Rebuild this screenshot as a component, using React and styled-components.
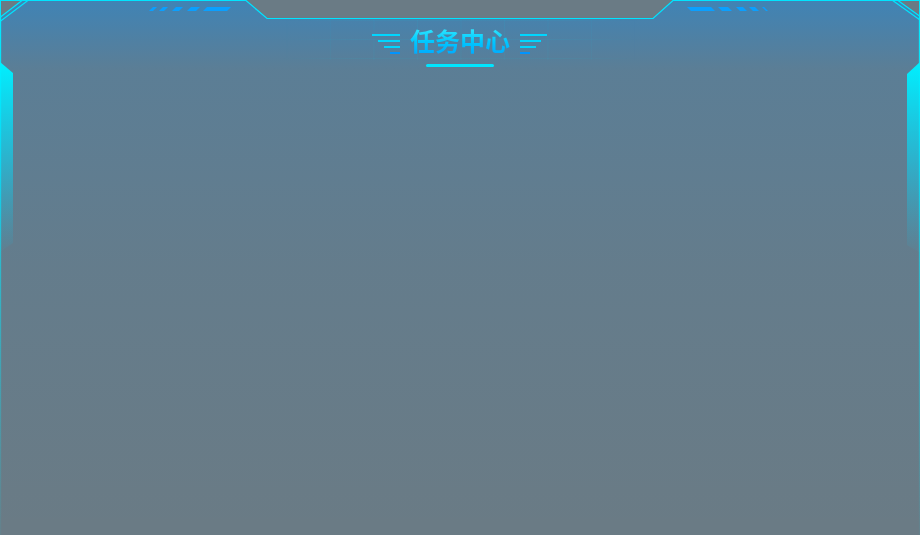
import React from "react";
import styled, { createGlobalStyle } from "styled-components";

const GlobalStyle = createGlobalStyle`
  html, body {
    margin: 0;
    padding: 0;
    background: #6a7b85;
    font-family: "Noto Sans CJK SC", "Noto Sans", sans-serif;
  }
`;

const Panel = styled.section`
  position: relative;
  width: 920px;
  height: 535px;
  overflow: hidden;
`;

const Frame = styled.svg`
  position: absolute;
  inset: 0;
  z-index: 0;
  pointer-events: none;
`;

const Header = styled.header`
  position: relative;
  z-index: 1;
  display: flex;
  flex-direction: column;
  align-items: center;
  padding-top: 20px;
`;

const TitleBand = styled.div`
  width: 360px;
  height: 40px;
  display: flex;
  align-items: center;
  justify-content: center;
  gap: 10px;
  background-image:
    linear-gradient(rgba(0, 229, 255, 0.06) 1px, transparent 1px),
    linear-gradient(90deg, rgba(0, 229, 255, 0.06) 1px, transparent 1px);
  background-size: 43.5px 19px;
  background-position: 6.5px 0;
  -webkit-mask-image: linear-gradient(90deg, transparent, #000 22%, #000 78%, transparent);
  mask-image: linear-gradient(90deg, transparent, #000 22%, #000 78%, transparent);
`;

const Wing = styled.div`
  width: 28px;
  margin-top: 8px;
  display: flex;
  flex-direction: column;
  gap: 4px;
  align-items: ${(p) => (p.$side === "left" ? "flex-end" : "flex-start")};
`;

const WingBar = styled.span`
  display: block;
  height: 2px;
  width: ${(p) => p.$w}px;
  background: ${(p) => (p.$last ? "#0094ff" : "#00d6ff")};
`;

const Title = styled.h1`
  margin: 0;
  font-size: 25px;
  line-height: 28px;
  font-weight: 700;
  letter-spacing: 0;
  background: linear-gradient(180deg, #36ecff 0%, #00c8ff 55%, #00acff 100%);
  -webkit-background-clip: text;
  background-clip: text;
  color: transparent;
`;

const Underline = styled.div`
  width: 68px;
  height: 3px;
  margin-top: 4px;
  border-radius: 2px;
  background: #00e5ff;
`;

const leftDashes = [
  [149, 157],
  [159, 168],
  [172, 183],
  [187, 200],
  [203, 231],
];
const rightDashes = [
  [687, 715],
  [718, 732],
  [736, 747],
  [749, 759],
  [762, 768],
];

function FrameArt() {
  return (
    <Frame width="920" height="535" viewBox="0 0 920 535">
      <defs>
        <linearGradient id="panelFill" x1="0" y1="0" x2="0" y2="535" gradientUnits="userSpaceOnUse">
          <stop offset="0" stopColor="#148ce6" stopOpacity="0.5" />
          <stop offset="0.13" stopColor="#148ce6" stopOpacity="0.17" />
          <stop offset="0.5" stopColor="#148ce6" stopOpacity="0.07" />
          <stop offset="1" stopColor="#148ce6" stopOpacity="0" />
        </linearGradient>
        <linearGradient id="edgeLine" x1="0" y1="17" x2="0" y2="535" gradientUnits="userSpaceOnUse">
          <stop offset="0" stopColor="#00eaff" stopOpacity="1" />
          <stop offset="1" stopColor="#00eaff" stopOpacity="0.05" />
        </linearGradient>
        <linearGradient id="sideBar" x1="0" y1="62" x2="0" y2="252" gradientUnits="userSpaceOnUse">
          <stop offset="0" stopColor="#00f0ff" stopOpacity="1" />
          <stop offset="0.5" stopColor="#00e0ff" stopOpacity="0.55" />
          <stop offset="1" stopColor="#00d0ff" stopOpacity="0.03" />
        </linearGradient>
      </defs>

      <path
        d="M0 17 L22 0 L246 0 L267 18 L653 18 L673 0 L898 0 L920 16 L920 535 L0 535 Z"
        fill="url(#panelFill)"
      />

      <path
        d="M0.5 17 L22 0.5 L246 0.5 L267 18.5 L653 18.5 L673 0.5 L898 0.5 L919.5 16"
        fill="none"
        stroke="#00e5ff"
        strokeWidth="1.2"
      />
      <path d="M0 0.5 L22 0.5 M0.5 0 L0.5 17" stroke="#00e5ff" strokeWidth="1" fill="none" />
      <path d="M898 0.5 L920 0.5 M919.5 0 L919.5 16" stroke="#00e5ff" strokeWidth="1" fill="none" />
      <path d="M0 21.5 L28.5 0" stroke="#00e5ff" strokeWidth="1.2" fill="none" />
      <path d="M892 0 L920 20" stroke="#00e5ff" strokeWidth="1.2" fill="none" />

      <path d="M0.5 17 L0.5 535" stroke="url(#edgeLine)" strokeWidth="1.3" fill="none" />
      <path d="M919.5 16 L919.5 535" stroke="url(#edgeLine)" strokeWidth="1.3" fill="none" />

      <polygon points="0,62 13,73 13,243 0,252" fill="url(#sideBar)" />
      <polygon points="920,62 907,74 907,245 920,253" fill="url(#sideBar)" />

      {leftDashes.map(([a, b]) => (
        <polygon key={a} points={`${a + 4},7 ${b},7 ${b - 4},11 ${a},11`} fill="#0aa0ff" />
      ))}
      {rightDashes.map(([a, b]) => (
        <polygon key={a} points={`${a},7 ${b - 4},7 ${b},11 ${a + 4},11`} fill="#0aa0ff" />
      ))}
    </Frame>
  );
}

const leftBars = [28, 22, 16, 10];
const rightBars = [27, 21, 16, 10];

export default function App() {
  return (
    <>
      <GlobalStyle />
      <Panel>
        <FrameArt />
        <Header>
          <TitleBand>
            <Wing $side="left">
              {leftBars.map((w, i) => (
                <WingBar key={i} $w={w} $last={i === 3} />
              ))}
            </Wing>
            <Title>任务中心</Title>
            <Wing $side="right">
              {rightBars.map((w, i) => (
                <WingBar key={i} $w={w} $last={i === 3} />
              ))}
            </Wing>
          </TitleBand>
          <Underline />
        </Header>
      </Panel>
    </>
  );
}
